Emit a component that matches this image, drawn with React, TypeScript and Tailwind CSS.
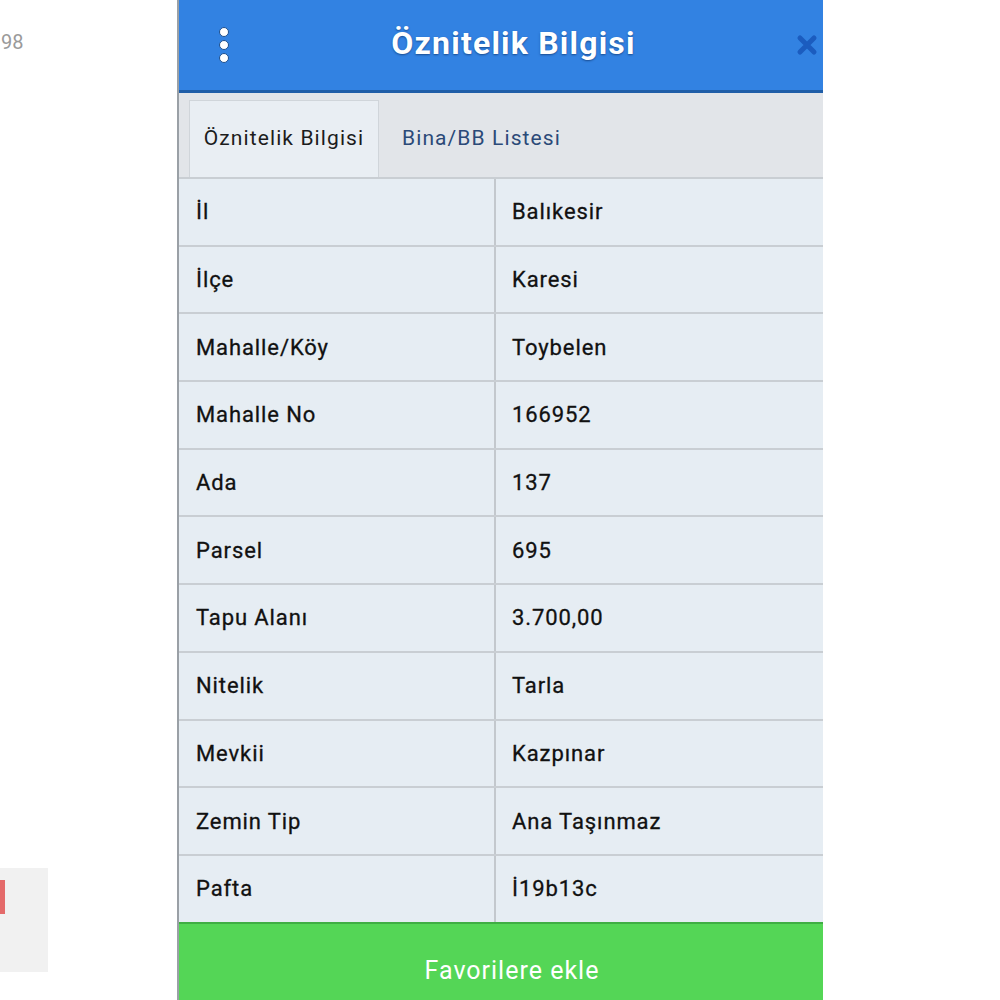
import React from 'react';

const rows: [string, string][] = [
  ['İl', 'Balıkesir'],
  ['İlçe', 'Karesi'],
  ['Mahalle/Köy', 'Toybelen'],
  ['Mahalle No', '166952'],
  ['Ada', '137'],
  ['Parsel', '695'],
  ['Tapu Alanı', '3.700,00'],
  ['Nitelik', 'Tarla'],
  ['Mevkii', 'Kazpınar'],
  ['Zemin Tip', 'Ana Taşınmaz'],
  ['Pafta', 'İ19b13c'],
];

export default function App() {
  return (
    <div
      className="relative w-[1000px] h-[1000px] bg-white overflow-hidden flex"
      style={{ fontFamily: 'Roboto, "Noto Sans", sans-serif' }}
    >
      {/* left strip of the page behind */}
      <div className="w-[177px] flex flex-col">
        <div className="pt-[27px] pl-[1px] text-[20px] text-[#9a9a9a]">98</div>
        <div className="flex-1" />
        <div className="mb-[28px] w-[48px] h-[104px] bg-[#f1f1f1] relative">
          <div className="absolute left-0 top-[12px] w-[5px] h-[34px] bg-[#e46a6a]" />
        </div>
      </div>

      {/* panel */}
      <div className="w-[646px] h-full flex flex-col border-l-2 border-[#9aa0a6]">
        <div className="h-[93px] bg-[#3282e2] border-b-[3px] border-[#1f5ea8] flex items-center px-[38px]">
          <svg width="14" height="38" viewBox="0 0 14 38">
            <circle cx="7" cy="6" r="4.5" fill="#fff" stroke="#1d4f8e" strokeWidth="1" />
            <circle cx="7" cy="19" r="4.5" fill="#fff" stroke="#1d4f8e" strokeWidth="1" />
            <circle cx="7" cy="32" r="4.5" fill="#fff" stroke="#1d4f8e" strokeWidth="1" />
          </svg>
          <div
            className="flex-1 text-center text-white font-bold text-[32px] tracking-[1.2px] -mt-[4px]"
            style={{ textShadow: '0 1px 2px rgba(10,40,90,0.6)' }}
          >
            Öznitelik Bilgisi
          </div>
          <svg width="22" height="22" viewBox="0 0 22 22" className="-mr-[33px]">
            <path d="M4 4 L18 18 M18 4 L4 18" stroke="#1b5cbf" strokeWidth="5" strokeLinecap="round" />
          </svg>
        </div>

        <div className="h-[84px] bg-[#e2e5e9] flex items-end pl-[10px]">
          <div className="h-[77px] w-[190px] bg-[#e9eef3] border border-b-0 border-[#d0d5da] flex items-center justify-center text-[21px] tracking-[1.1px] text-[#1c1c1c]">
            Öznitelik Bilgisi
          </div>
          <div className="h-[77px] px-[23px] flex items-center text-[21px] tracking-[1.1px] text-[#2b4a78]">
            Bina/BB Listesi
          </div>
        </div>

        <div className="flex-1 flex flex-col bg-[#e6edf3]">
          {rows.map(([label, value]) => (
            <div
              key={label}
              className="h-[67.7px] flex border-t-2 border-[#c9ced3] text-[22px] tracking-[0.9px] text-[#111]"
              style={{ WebkitTextStroke: '0.3px #111' }}
            >
              <div className="w-[317px] pl-[17px] flex items-center border-r-2 border-[#c3c8cd]">{label}</div>
              <div className="flex-1 pl-[16px] flex items-center">{value}</div>
            </div>
          ))}
        </div>

        <div className="h-[78px] bg-[#54d656] border-t-2 border-[#3fae43] flex items-center justify-center pt-[18px] pl-[22px] text-white text-[25px] tracking-[1px]">
          Favorilere ekle
        </div>
      </div>
      <div className="flex-1" />
    </div>
  );
}
